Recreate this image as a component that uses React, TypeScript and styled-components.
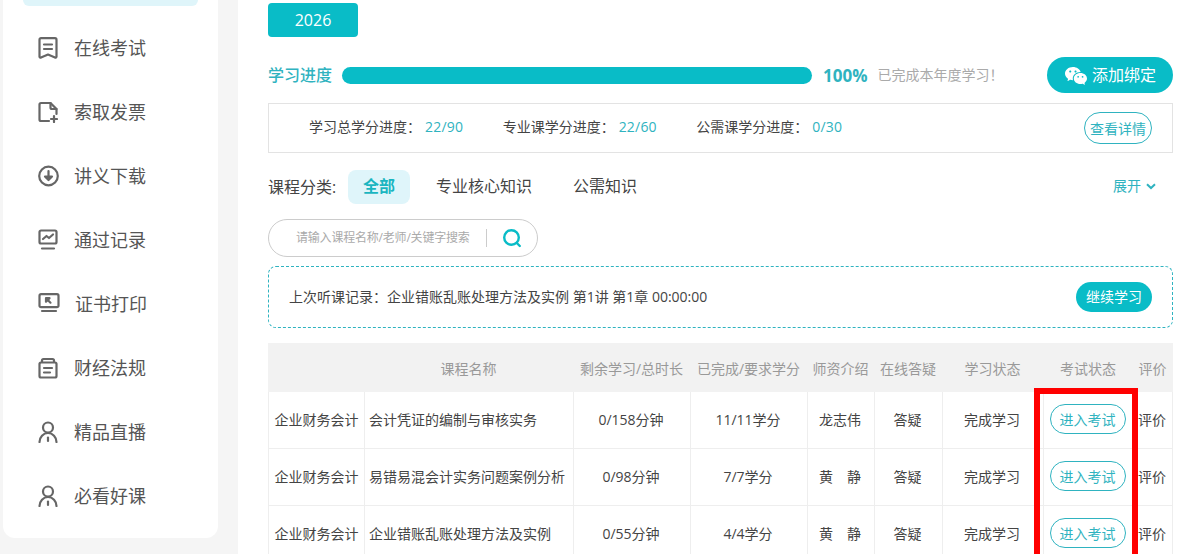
import React from "react";
import styled, { createGlobalStyle } from "styled-components";
import { RiWechatFill } from "react-icons/ri";

const GlobalStyle = createGlobalStyle`
  html, body {
    margin: 0;
    height: 100%;
    overflow: hidden;
    background: #f5f5f5;
    font-family: "Open Sans", "Noto Sans CJK SC", sans-serif;
  }
  * {
    box-sizing: border-box;
  }
`;

const teal = "#09bcc7";
const tealText = "#2fb3c0";

const Page = styled.div`
  display: flex;
  align-items: flex-start;
  height: 554px;
  overflow: hidden;
  padding-left: 3px;
`;

const Sidebar = styled.nav`
  width: 215px;
  flex: none;
  background: #fff;
  border-radius: 0 0 12px 12px;
  padding: 0 20px 20px;
  display: flex;
  flex-direction: column;
  gap: 20px;
`;

const ActiveTail = styled.div`
  height: 6px;
  background: #dff5fa;
  border-radius: 0 0 10px 10px;
`;

const NavItem = styled.a<{ $gap: number }>`
  height: 44px;
  padding-left: 15px;
  display: flex;
  align-items: center;
  gap: ${(p) => p.$gap}px;
  color: #555;
  font-size: 18px;
  svg {
    flex: none;
    fill: none;
    stroke: #666;
    stroke-width: 2.2;
    stroke-linecap: round;
    stroke-linejoin: round;
  }
`;

const NavLabel = styled.span`
  padding-bottom: 2px;
`;

const Main = styled.main`
  width: 962px;
  height: 554px;
  flex: none;
  margin-left: 20px;
  background: #fff;
  padding: 3px 27px 0 30px;
`;

const YearButton = styled.div`
  width: 90px;
  height: 34px;
  background: ${teal};
  border-radius: 4px;
  color: #fff;
  font-size: 16px;
  display: flex;
  align-items: center;
  justify-content: center;
`;

const ProgressRow = styled.div`
  margin-top: 20px;
  height: 36px;
  display: flex;
  align-items: center;
`;

const ProgressLabel = styled.span`
  width: 74px;
  padding-bottom: 2px;
  color: ${tealText};
  font-size: 16px;
  font-weight: 500;
`;

const ProgressTrack = styled.div`
  width: 470px;
  height: 17px;
  border-radius: 9px;
  background: ${teal};
`;

const Percent = styled.span`
  margin-left: 11px;
  color: ${tealText};
  font-size: 17px;
  font-weight: 700;
`;

const ProgressNote = styled.span`
  margin-left: 10px;
  padding-bottom: 2px;
  color: #aaa;
  font-size: 14px;
`;

const BindButton = styled.div`
  margin-left: auto;
  width: 126px;
  height: 36px;
  padding-bottom: 2px;
  border-radius: 18px;
  background: ${teal};
  color: #fff;
  font-size: 16px;
  display: flex;
  align-items: center;
  justify-content: center;
  gap: 4px;
  svg {
    margin-top: 3px;
  }
`;

const CreditBox = styled.div`
  margin-top: 10px;
  height: 50px;
  border: 1px solid #e3e3e3;
  padding: 0 20px 0 40px;
  display: flex;
  align-items: center;
  font-size: 14px;
  color: #444;
`;

const CreditItem = styled.span`
  margin-right: 39.5px;
  padding-bottom: 4px;
`;

const CreditValue = styled.span`
  margin-left: 4px;
  letter-spacing: 0.2px;
  color: ${tealText};
`;

const OutlineButton = styled.span<{ $width: number; $height: number }>`
  width: ${(p) => p.$width}px;
  height: ${(p) => p.$height}px;
  border: 1px solid ${tealText};
  border-radius: ${(p) => p.$height / 2}px;
  color: ${tealText};
  font-size: 14px;
  display: inline-flex;
  align-items: center;
  justify-content: center;
`;

const DetailSlot = styled.div`
  margin-left: auto;
  display: flex;
`;

const FilterRow = styled.div`
  margin-top: 17px;
  height: 34px;
  display: flex;
  align-items: center;
  font-size: 16px;
  color: #444;
`;

const FilterLabel = styled.span`
  width: 80px;
  padding-bottom: 2px;
`;

const FilterPill = styled.span<{ $active?: boolean }>`
  height: 34px;
  padding-bottom: 4px;
  display: flex;
  align-items: center;
  justify-content: center;
  margin-right: ${(p) => (p.$active ? 26 : 41)}px;
  ${(p) =>
    p.$active &&
    `
    width: 62px;
    background: #dff5fa;
    border-radius: 8px;
    color: #1ab5c0;
    font-weight: 700;
  `}
`;

const Expand = styled.span`
  margin-left: auto;
  margin-right: 17px;
  padding-bottom: 4px;
  color: ${tealText};
  font-size: 14px;
  display: flex;
  align-items: center;
  gap: 5px;
  svg {
    margin-top: 3px;
  }
`;

const SearchBox = styled.div`
  margin-top: 15px;
  width: 270px;
  height: 38px;
  border: 1px solid #ccc;
  border-radius: 19px;
  padding-left: 27px;
  display: flex;
  align-items: center;
`;

const Placeholder = styled.span`
  width: 190px;
  padding-bottom: 2px;
  color: #aaa;
  font-size: 12px;
  letter-spacing: -0.2px;
  white-space: nowrap;
`;

const SearchDivider = styled.span`
  width: 1px;
  height: 18px;
  background: #ccc;
  margin-right: 15px;
`;

const LastRecord = styled.div`
  margin-top: 9px;
  height: 62px;
  border: 1px dashed ${tealText};
  border-radius: 8px;
  padding: 0 20px;
  display: flex;
  align-items: center;
  justify-content: space-between;
  font-size: 14px;
  color: #444;
`;

const RecordText = styled.span`
  padding-bottom: 2px;
`;

const ContinueButton = styled.span`
  width: 76px;
  height: 30px;
  padding-bottom: 2px;
  border-radius: 15px;
  background: ${teal};
  color: #fff;
  font-size: 14px;
  display: flex;
  align-items: center;
  justify-content: center;
`;

const TableWrap = styled.div`
  margin-top: 15px;
  position: relative;
`;

const Table = styled.table`
  width: 905px;
  table-layout: fixed;
  border-collapse: separate;
  border-spacing: 0;
  font-size: 14px;
  color: #444;
`;

const HeadCell = styled.th`
  height: 49px;
  background: #f2f2f2;
  color: #999;
  font-weight: 400;
  padding: 0 2px 0 0;
  white-space: nowrap;
`;

const Cell = styled.td<{ $left?: boolean }>`
  height: 57px;
  border-right: 1px solid #eee;
  border-bottom: 1px solid #eee;
  padding: ${(p) => (p.$left ? "0 0 2px 4px" : "0 2px 2px 0")};
  text-align: ${(p) => (p.$left ? "left" : "center")};
  white-space: nowrap;
  &:first-child {
    border-left: 1px solid #eee;
    padding-right: 0;
  }
`;

const RedMark = styled.div`
  position: absolute;
  left: 766px;
  top: 45px;
  width: 104px;
  height: 175px;
  border: 6px solid #f00;
  pointer-events: none;
`;

const DocIcon = () => (
  <svg width="20" height="22" viewBox="0 0 20 22">
    <path d="M3 1.200h14a1.500 1.500 0 0 1 1.500 1.500v17a1 1 0 0 1-1.500.8L10 17.500l-7 3a1 1 0 0 1-1.500-.8v-17A1.500 1.500 0 0 1 3 1.200z" />
    <path d="M6 7.500h8M6 12h8" />
  </svg>
);

const InvoiceIcon = () => (
  <svg width="20" height="22" viewBox="0 0 20 22">
    <path d="M11 20H3a1.500 1.500 0 0 1-1.500-1.500v-15A1.500 1.500 0 0 1 3 2h9.500l6 6v5" />
    <path d="M12.500 2v4.500A1.500 1.500 0 0 0 14 8h4.500" />
    <path d="M16 15v6M13 18h6" />
  </svg>
);

const DownloadIcon = () => (
  <svg width="21" height="22" viewBox="0 0 21 22">
    <circle cx="10.500" cy="11" r="9.300" />
    <path d="M10.500 6v8" />
    <path d="M7 11.500l3.500 3.500 3.500-3.500z" fill="#666" />
  </svg>
);

const ChartIcon = () => (
  <svg width="20" height="22" viewBox="0 0 20 22">
    <path d="M3 1.500h14A1.500 1.500 0 0 1 18.500 3v10a1.500 1.500 0 0 1-1.500 1.500H3A1.500 1.500 0 0 1 1.500 13V3A1.500 1.500 0 0 1 3 1.500z" />
    <path d="M5 10l3.500-3 2.500 2 4-3.500" />
    <path d="M4 19.500h12" />
  </svg>
);

const ScreenIcon = () => (
  <svg width="22" height="22" viewBox="0 0 22 22">
    <path d="M3 1.200h16a1.500 1.500 0 0 1 1.500 1.500v10A1.500 1.500 0 0 1 19 14.200H3a1.500 1.500 0 0 1-1.500-1.500v-10A1.500 1.500 0 0 1 3 1.200z" />
    <path d="M8 5.200h3.500L8 8.700z" fill="#666" />
    <path d="M9.500 6.700l3 3" />
    <path d="M4 18h14" />
  </svg>
);

const LawIcon = () => (
  <svg width="20" height="22" viewBox="0 0 20 22">
    <path d="M4 5V3.500A1.500 1.500 0 0 1 5.500 2h9A1.500 1.500 0 0 1 16 3.500V5" />
    <path d="M3 5.500h14A1.500 1.500 0 0 1 18.500 7v12a1.500 1.500 0 0 1-1.500 1.500H3A1.500 1.500 0 0 1 1.500 19V7A1.500 1.500 0 0 1 3 5.500z" />
    <path d="M6 11h8M6 15.500h6" />
  </svg>
);

const UserIcon = () => (
  <svg width="20" height="22" viewBox="0 0 20 22">
    <circle cx="10" cy="6.500" r="5" />
    <path d="M1.500 21a8.500 9 0 0 1 17 0" />
    <path d="M10 16.500V20" />
  </svg>
);

const SearchIcon = () => (
  <svg width="20" height="20" viewBox="0 0 20 20" fill="none" stroke={teal} strokeWidth="2.400" strokeLinecap="round">
    <circle cx="9.500" cy="9.500" r="7.300" />
    <path d="M14.800 15l3 3" />
  </svg>
);

const ChevronIcon = () => (
  <svg width="10" height="7" viewBox="0 0 10 7" fill="none" stroke={tealText} strokeWidth="2">
    <path d="M1 1.200l4 3.800 4-3.800" />
  </svg>
);

const navItems = [
  { label: "在线考试", icon: <DocIcon />, gap: 16 },
  { label: "索取发票", icon: <InvoiceIcon />, gap: 16 },
  { label: "讲义下载", icon: <DownloadIcon />, gap: 15 },
  { label: "通过记录", icon: <ChartIcon />, gap: 16 },
  { label: "证书打印", icon: <ScreenIcon />, gap: 15 },
  { label: "财经法规", icon: <LawIcon />, gap: 16 },
  { label: "精品直播", icon: <UserIcon />, gap: 16 },
  { label: "必看好课", icon: <UserIcon />, gap: 16 },
];

const columns = [
  { title: "", width: 97 },
  { title: "课程名称", width: 209 },
  { title: "剩余学习/总时长", width: 117 },
  { title: "已完成/要求学分", width: 117 },
  { title: "师资介绍", width: 67 },
  { title: "在线答疑", width: 68 },
  { title: "学习状态", width: 101 },
  { title: "考试状态", width: 90 },
  { title: "评价", width: 39 },
];

const rows = [
  { name: "会计凭证的编制与审核实务", time: "0/158分钟", credit: "11/11学分", teacher: "龙志伟" },
  { name: "易错易混会计实务问题案例分析", time: "0/98分钟", credit: "7/7学分", teacher: "黄　静" },
  { name: "企业错账乱账处理方法及实例", time: "0/55分钟", credit: "4/4学分", teacher: "黄　静" },
];

export default function App() {
  return (
    <>
      <GlobalStyle />
      <Page>
        <Sidebar>
          <ActiveTail />
          {navItems.map((item) => (
            <NavItem key={item.label} $gap={item.gap}>
              {item.icon}
              <NavLabel>{item.label}</NavLabel>
            </NavItem>
          ))}
        </Sidebar>
        <Main>
          <YearButton>2026</YearButton>
          <ProgressRow>
            <ProgressLabel>学习进度</ProgressLabel>
            <ProgressTrack />
            <Percent>100%</Percent>
            <ProgressNote>已完成本年度学习！</ProgressNote>
            <BindButton>
              <RiWechatFill size={24} />
              添加绑定
            </BindButton>
          </ProgressRow>
          <CreditBox>
            <CreditItem>
              学习总学分进度：<CreditValue>22/90</CreditValue>
            </CreditItem>
            <CreditItem>
              专业课学分进度：<CreditValue>22/60</CreditValue>
            </CreditItem>
            <CreditItem>
              公需课学分进度：<CreditValue>0/30</CreditValue>
            </CreditItem>
            <DetailSlot>
              <OutlineButton $width={68} $height={32}>查看详情</OutlineButton>
            </DetailSlot>
          </CreditBox>
          <FilterRow>
            <FilterLabel>课程分类:</FilterLabel>
            <FilterPill $active>全部</FilterPill>
            <FilterPill>专业核心知识</FilterPill>
            <FilterPill>公需知识</FilterPill>
            <Expand>
              展开
              <ChevronIcon />
            </Expand>
          </FilterRow>
          <SearchBox>
            <Placeholder>请输入课程名称/老师/关键字搜索</Placeholder>
            <SearchDivider />
            <SearchIcon />
          </SearchBox>
          <LastRecord>
            <RecordText>上次听课记录：企业错账乱账处理方法及实例 第1讲 第1章 00:00:00</RecordText>
            <ContinueButton>继续学习</ContinueButton>
          </LastRecord>
          <TableWrap>
            <Table>
              <colgroup>
                {columns.map((c, i) => (
                  <col key={i} width={c.width} />
                ))}
              </colgroup>
              <thead>
                <tr>
                  {columns.map((c, i) => (
                    <HeadCell key={i}>{c.title}</HeadCell>
                  ))}
                </tr>
              </thead>
              <tbody>
                {rows.map((r) => (
                  <tr key={r.name}>
                    <Cell>企业财务会计</Cell>
                    <Cell $left>{r.name}</Cell>
                    <Cell>{r.time}</Cell>
                    <Cell>{r.credit}</Cell>
                    <Cell>{r.teacher}</Cell>
                    <Cell>答疑</Cell>
                    <Cell>完成学习</Cell>
                    <Cell>
                      <OutlineButton $width={76} $height={30}>进入考试</OutlineButton>
                    </Cell>
                    <Cell>评价</Cell>
                  </tr>
                ))}
              </tbody>
            </Table>
            <RedMark />
          </TableWrap>
        </Main>
      </Page>
    </>
  );
}
